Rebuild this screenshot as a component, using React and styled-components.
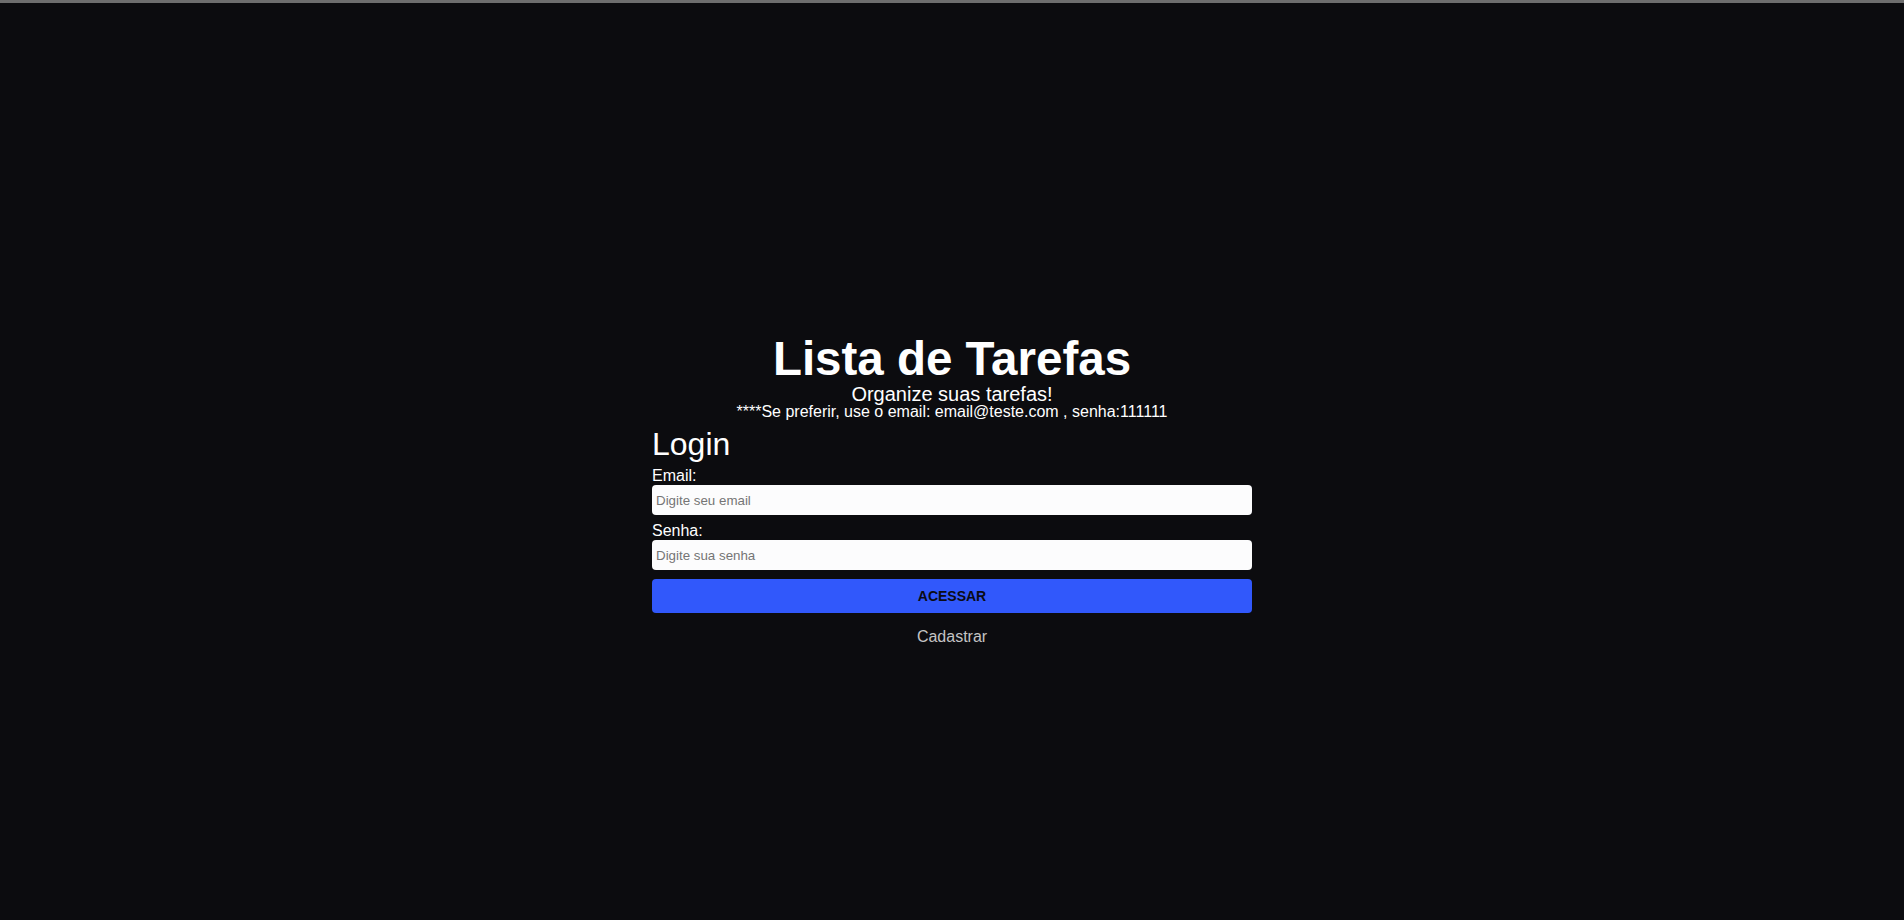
import React, {useState} from 'react';
import styled, {createGlobalStyle} from 'styled-components';

const GlobalStyle = createGlobalStyle`
  * {
    box-sizing: border-box;
  }
  body {
    margin: 0;
    background-color: #0c0c0f;
    font-family: "Liberation Sans", Arial, sans-serif;
  }
`;

const App = () => {
    const [email, setEmail] = useState('');
    const [senha, setSenha] = useState('');

    return (<Page>
        <GlobalStyle/>
        <Header>
            <Title>Lista de Tarefas</Title>
            <Subtitle>Organize suas tarefas!</Subtitle>
            <Hint>****Se preferir, use o email: email@teste.com , senha:111111</Hint>
        </Header>
        <Form onSubmit={(e) => e.preventDefault()}>
            <FormTitle>Login</FormTitle>
            <Label gap={4}>Email:</Label>
            <Input
                type="email"
                placeholder="Digite seu email"
                value={email}
                onChange={(e) => setEmail(e.target.value)}
            />
            <Label gap={7}>Senha:</Label>
            <Input
                type="password"
                placeholder="Digite sua senha"
                value={senha}
                onChange={(e) => setSenha(e.target.value)}
            />
            <Button type="submit">ACESSAR</Button>
            <SignUp>Cadastrar</SignUp>
        </Form>
    </Page>);
};

export default App;

const Page = styled.div`
  min-height: 100vh;
  border-top: 3px solid #6e6e6e;
  background-color: #0c0c0f;
  display: flex;
  flex-direction: column;
  align-items: center;
  padding-top: 330px;
  color: #fff;
`;

const Header = styled.div`
  display: flex;
  flex-direction: column;
  align-items: center;
  text-align: center;
`;

const Title = styled.h1`
  margin: 0;
  font-size: 47.5px;
  line-height: 51px;
  font-weight: bold;
  color: #fff;
`;

const Subtitle = styled.h2`
  margin: 0;
  font-size: 20px;
  line-height: 20px;
  font-weight: normal;
  color: #fff;
`;

const Hint = styled.p`
  margin: 0;
  font-size: 16px;
  line-height: 15px;
  color: #fff;
`;

const Form = styled.form`
  width: 600px;
  display: flex;
  flex-direction: column;
  margin-top: 7px;
`;

const FormTitle = styled.h2`
  margin: 0;
  font-size: 32px;
  font-weight: normal;
  color: #fff;
`;

const Label = styled.label`
  margin-top: ${({gap}) => gap}px;
  font-size: 16px;
  color: #fff;
`;

const Input = styled.input`
  width: 100%;
  height: 30px;
  border: none;
  border-radius: 4px;
  padding: 0 4px;
  background-color: #fcfcfd;
  font-family: "Liberation Sans", Arial, sans-serif;
  font-size: 13.33px;
  color: #222;
  outline: none;

  &::placeholder {
    color: #757575;
  }
`;

const Button = styled.button`
  margin-top: 9px;
  height: 34px;
  width: 100%;
  border: none;
  border-radius: 4px;
  background-color: #3158fb;
  color: #0b0b14;
  font-family: "Liberation Sans", Arial, sans-serif;
  font-size: 14px;
  font-weight: bold;
  cursor: pointer;
`;

const SignUp = styled.a`
  margin-top: 15px;
  align-self: center;
  font-size: 16px;
  color: #c4c4c4;
  cursor: pointer;
`;
